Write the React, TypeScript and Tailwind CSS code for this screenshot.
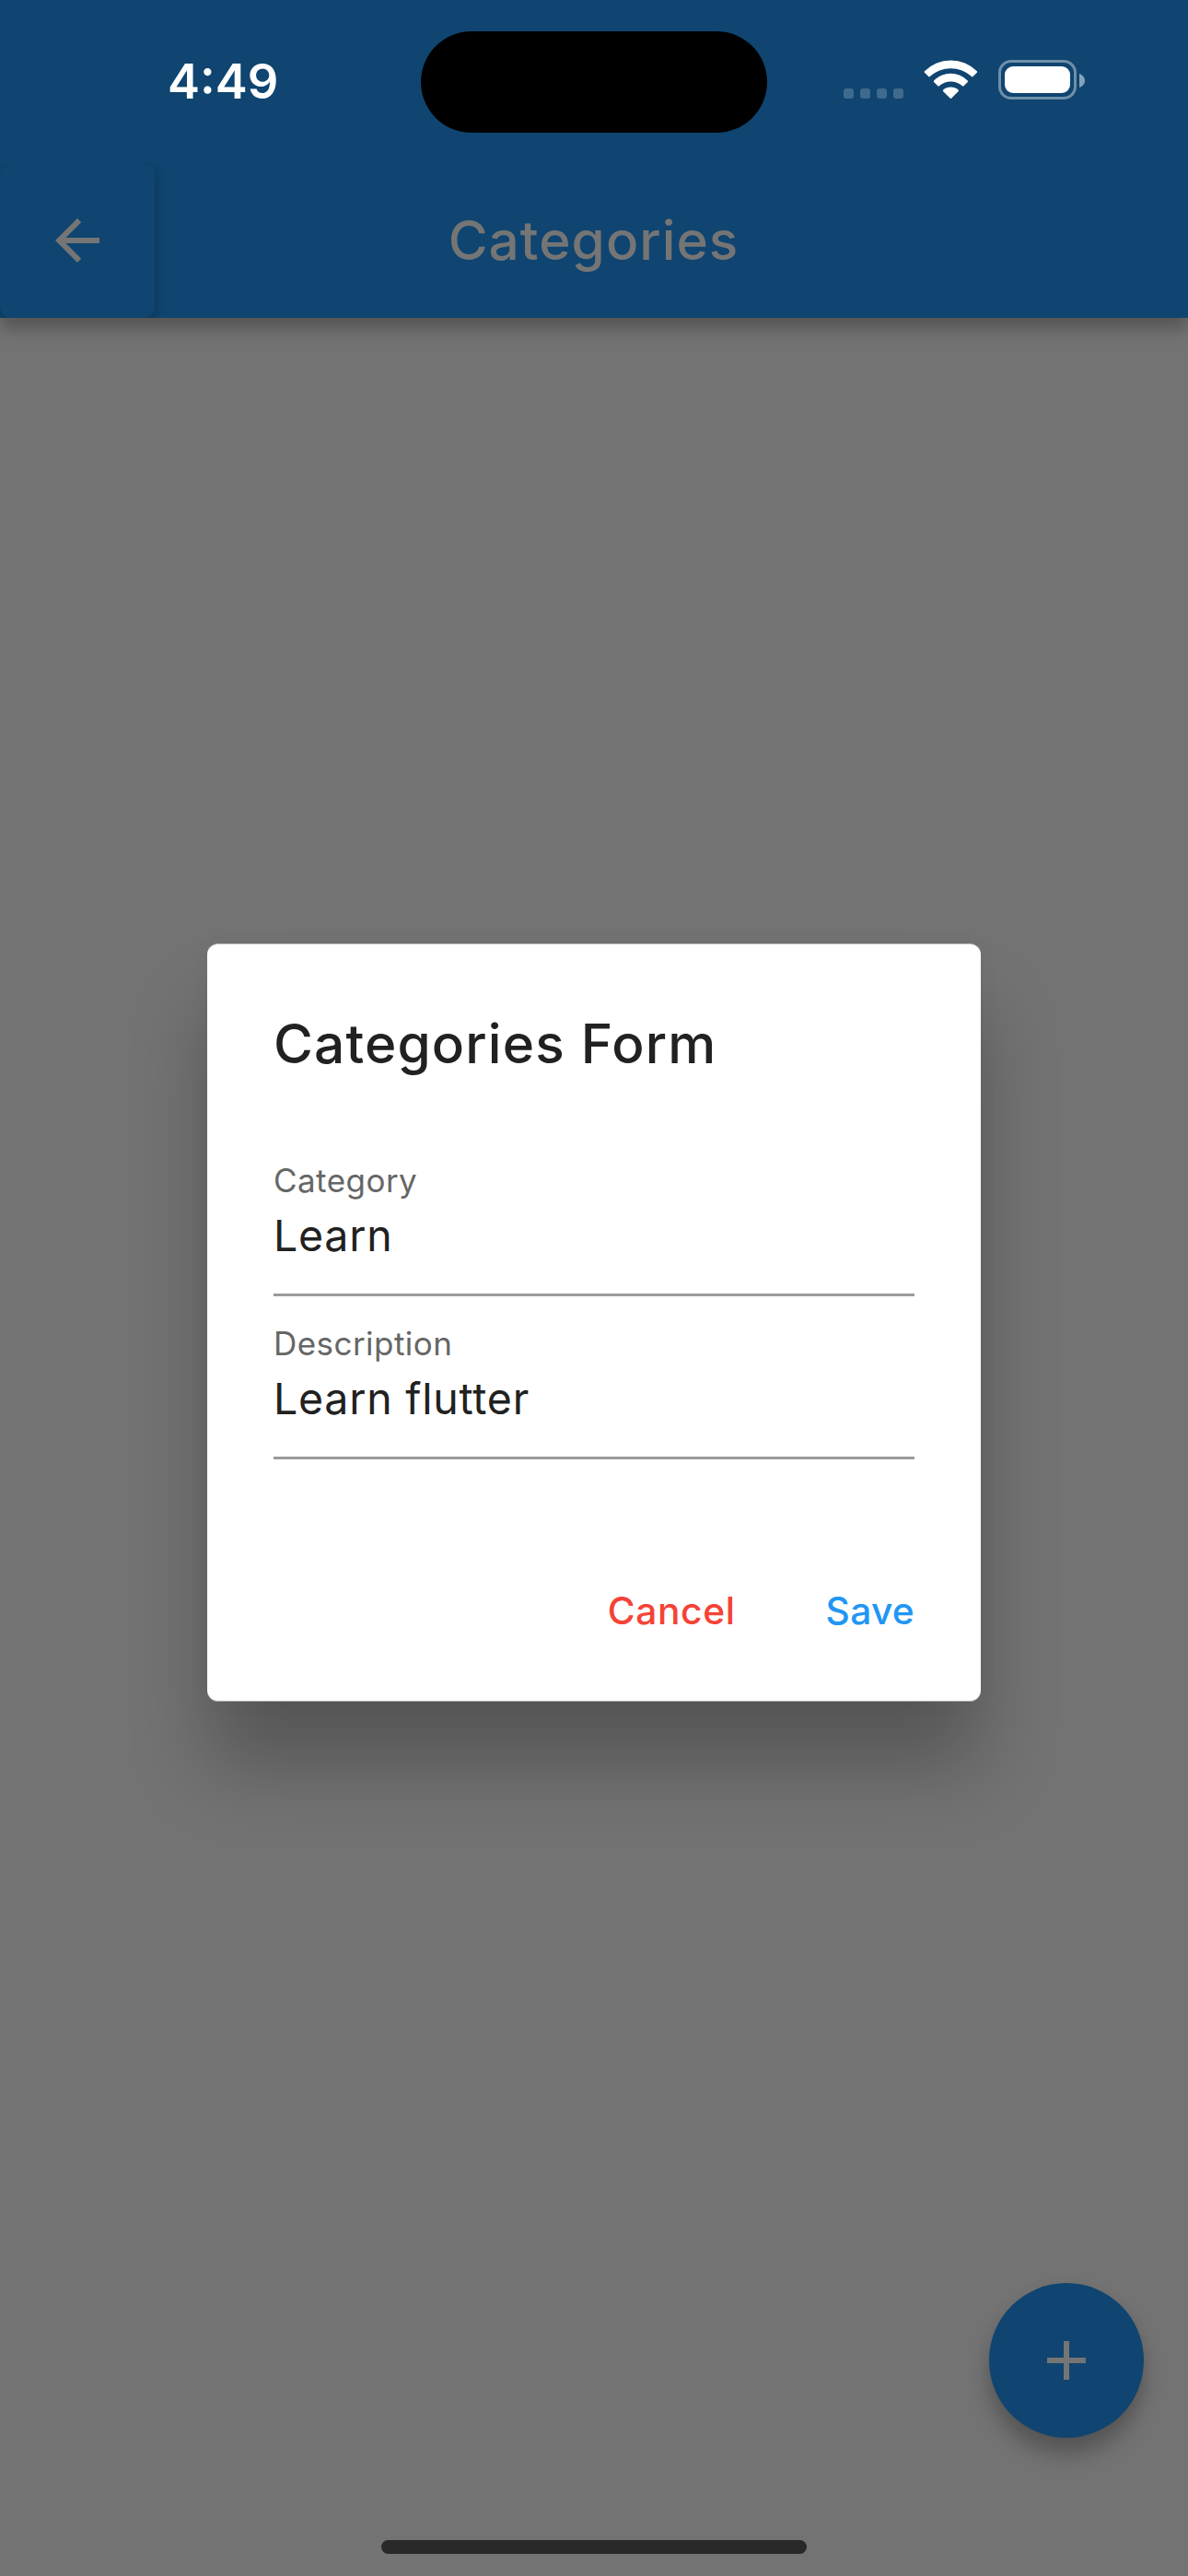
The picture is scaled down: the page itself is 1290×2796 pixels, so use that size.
function WifiIcon() {
  return (
    <svg className="h-[42px] w-[59px]" viewBox="0 0 59 42" fill="white">
      <path d="M.9 13.7Q.3 13 1 12.3A40 40 0 0 1 57.8 12.3Q58.5 13 57.9 13.7L53.3 18.2Q52.7 18.7 52 18.1A33.6 33.6 0 0 0 6.8 18.1Q6.1 18.7 5.5 18.2Z" />
      <path d="M11 23.9Q10.5 23.3 11.1 22.6A25.4 25.4 0 0 1 47.7 22.6Q48.3 23.3 47.8 23.9L43.2 28.5Q42.6 29 41.9 28.3A18.4 18.4 0 0 0 16.9 28.3Q16.2 29 15.6 28.5Z" />
      <path d="M21 33.9Q20.5 33.3 21.1 32.7A12.2 12.2 0 0 1 37.7 32.7Q38.3 33.3 37.8 33.9L30 41.7Q29.4 42.2 28.8 41.7Z" />
    </svg>
  );
}

function Battery() {
  return (
    <div className="flex items-center gap-[3px]">
      <div className="h-[43px] w-[85px] rounded-[14px] border-[3px] border-white/40 p-[4px]">
        <div className="h-[29px] w-[71px] rounded-[9px] bg-white" />
      </div>
      <svg className="mt-[1px] h-[15px] w-[6px]" viewBox="0 0 6 15" fill="white" fillOpacity=".5">
        <path d="M0 0C3.6 1.3 6 4.2 6 7.5S3.6 13.7 0 15Z" />
      </svg>
    </div>
  );
}

function StatusBar() {
  return (
    <div className="flex h-[177px] items-start">
      <div className="w-[457px] pt-[58px] pl-[182px] text-[52.5px] leading-[60px] font-semibold text-white">
        4:49
      </div>
      <div className="mt-[34px] h-[110px] w-[376px] rounded-full bg-black" />
      <div className="mt-[65px] ml-[83px] flex items-start">
        <div className="mt-[31px] flex gap-[7px]">
          {[0, 1, 2, 3].map((dot) => (
            <div key={dot} className="size-[11px] rounded-[3px] bg-white/20" />
          ))}
        </div>
        <div className="ml-[22px] flex">
          <WifiIcon />
        </div>
        <div className="ml-[22px]">
          <Battery />
        </div>
      </div>
    </div>
  );
}

function Toolbar() {
  return (
    <div className="grid h-[168px] grid-cols-[168px_1fr_168px] overflow-hidden">
      <button className="flex size-[168px] items-center justify-center rounded-[12px] bg-[#0f4570] shadow-[0_6px_14px_rgba(0,0,0,0.26)]">
        <svg className="size-[72px]" viewBox="0 0 24 24" fill="#757575">
          <path d="M20 11H7.83l5.59-5.59L12 4l-8 8 8 8 1.41-1.41L7.83 13H20v-2z" />
        </svg>
      </button>
      <h1 className="pr-[1px] text-center text-[58.5px] leading-[168px] font-medium tracking-[1.03px] text-[#757575]">
        Categories
      </h1>
    </div>
  );
}

function Field({ label, value }: { label: string; value: string }) {
  return (
    <div className="flex flex-col border-b-[3px] border-[#9b9b9b] pb-[39px]">
      <label className="text-[35px] leading-[36px] tracking-[0.45px] text-[#666666]">{label}</label>
      <span className="mt-[18px] text-[46.5px] leading-[48px] tracking-[0.75px] text-[#212121]">{value}</span>
    </div>
  );
}

function FormDialog() {
  return (
    <div className="h-[823px] w-[840px] rounded-[12px] border-t border-b border-t-[#b9b9b9] border-b-[#a9a9a9] bg-white px-[72px] pt-[72px] shadow-[0_72px_84px_-2px_rgba(0,0,0,0.25),0_0_24px_rgba(0,0,0,0.03)]">
      <h2 className="text-[58.5px] leading-[72px] font-medium tracking-[1.15px] text-[#212121]">Categories Form</h2>
      <div className="mt-[94px] flex flex-col gap-[33px]">
        <Field label="Category" value="Learn" />
        <Field label="Description" value="Learn flutter" />
      </div>
      <div className="mt-[141px] flex justify-end gap-[98px] text-[40.7px] leading-[48px] font-medium">
        <button className="tracking-[0.64px] text-[#f44336]">Cancel</button>
        <button className="tracking-[0.28px] text-[#2196f3]">Save</button>
      </div>
    </div>
  );
}

export default function App() {
  return (
    <div className="relative h-[2796px] w-[1290px] overflow-hidden bg-[#737373] font-[Inter,sans-serif]">
      <header className="h-[345px] bg-[#0f4570] shadow-[0_12px_16px_rgba(0,0,0,0.25)]">
        <StatusBar />
        <Toolbar />
      </header>

      <div className="absolute inset-0 flex items-start justify-center pt-[1024px]">
        <FormDialog />
      </div>

      <button className="absolute top-[2478px] left-[1074px] flex size-[168px] items-center justify-center rounded-full bg-[#0f4570] shadow-[0_18px_22px_rgba(0,0,0,0.25),0_0_16px_rgba(0,0,0,0.03)]">
        <svg className="size-[72px]" viewBox="0 0 24 24" fill="#757575">
          <path d="M19 13h-6v6h-2v-6H5v-2h6V5h2v6h6v2z" />
        </svg>
      </button>

      <div className="absolute bottom-[24px] left-[414px] h-[15px] w-[462px] rounded-full bg-[#292929]" />
    </div>
  );
}
